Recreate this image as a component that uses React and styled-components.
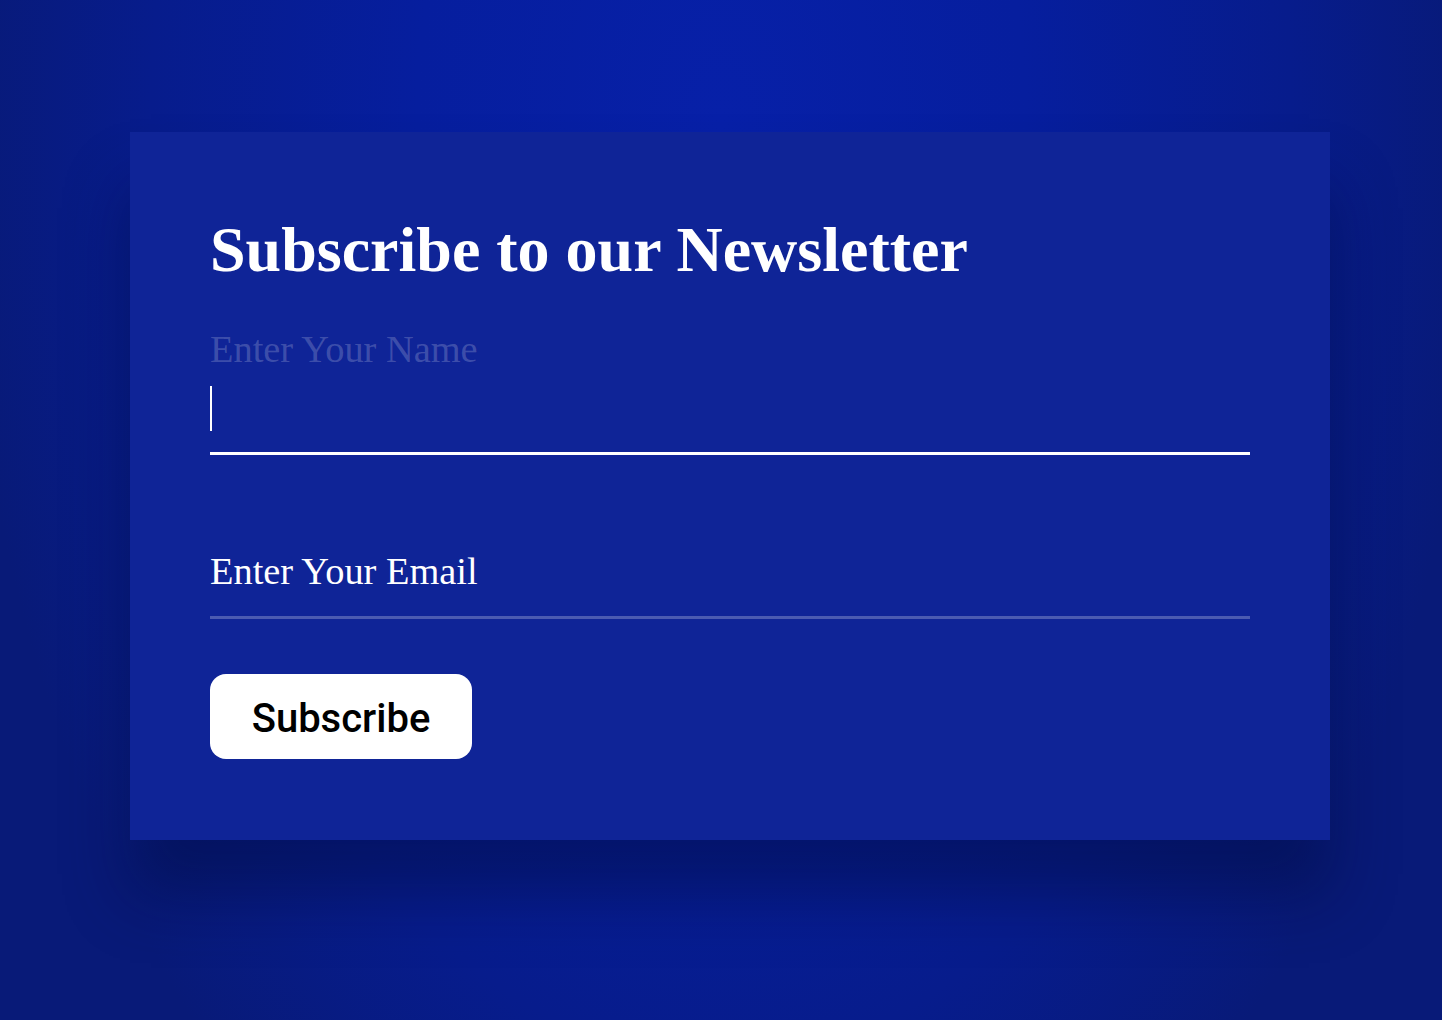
import React from 'react'
import styled, { createGlobalStyle } from 'styled-components'

const GlobalStyle = createGlobalStyle`
  * { box-sizing: border-box; }
  body {
    margin: 0;
    font-family: "Liberation Serif", "Times New Roman", serif;
  }
`

const Page = styled.div`
  width: 100%;
  height: 1020px;
  overflow: hidden;
  padding-top: 132px;
  padding-left: 130px;
  background: radial-gradient(ellipse 760px 1250px at 50% 12%, #0720a8 0%, #061e9e 40%, #071c8c 75%, #081a78 100%);
`

const Card = styled.div`
  width: 1200px;
  height: 708px;
  background: #0f2497;
  padding: 82px 80px 80px;
  display: flex;
  flex-direction: column;
  box-shadow: 0 55px 60px rgba(2, 10, 60, 0.45);
`

const Title = styled.h1`
  margin: 0 0 39px;
  font-size: 64px;
  line-height: 72px;
  font-weight: bold;
  color: #fff;
`

const Field = styled.div`
  position: relative;
  padding-top: 50px;
  margin-bottom: ${p => p.$gap}px;
`

const Label = styled.label`
  position: absolute;
  left: 0;
  top: ${p => (p.$raised ? 2 : 60)}px;
  font-size: 38.4px;
  line-height: 44px;
  color: ${p => (p.$raised ? 'rgba(255, 255, 255, 0.2)' : '#fff')};
  pointer-events: none;
`

const Input = styled.input`
  display: block;
  width: 100%;
  height: 80px;
  padding: 0;
  background: transparent;
  border: none;
  border-bottom: 3px solid ${p => (p.$active ? '#fff' : 'rgba(255, 255, 255, 0.25)')};
  outline: none;
  color: #fff;
  font-family: inherit;
  font-size: 38.4px;
  caret-color: transparent;
`

const Caret = styled.span`
  position: absolute;
  left: 0;
  top: 61px;
  width: 2px;
  height: 45px;
  background: #fff;
`

const Button = styled.button`
  align-self: flex-start;
  width: 262px;
  height: 85px;
  padding: 4px 0 0;
  border: none;
  border-radius: 16px;
  background: #fff;
  color: #000;
  font-family: Roboto, "Liberation Sans", Arial, sans-serif;
  font-weight: 500;
  font-size: 40px;
  cursor: pointer;
`

export default function App() {
  return (
    <>
      <GlobalStyle />
      <Page>
        <Card>
          <Title>Subscribe to our Newsletter</Title>
          <Field $gap={34}>
            <Input $active type="text" />
            <Caret />
            <Label $raised>Enter Your Name</Label>
          </Field>
          <Field $gap={55}>
            <Input type="email" />
            <Label>Enter Your Email</Label>
          </Field>
          <Button>Subscribe</Button>
        </Card>
      </Page>
    </>
  )
}
